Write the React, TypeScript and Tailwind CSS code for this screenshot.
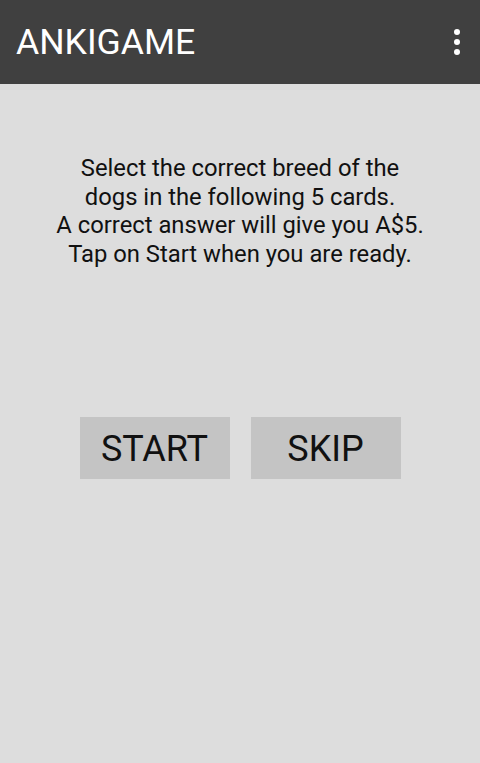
export default function App() {
  return (
    <div className="w-[480px] h-[763px] bg-[#dddddd] flex flex-col" style={{ fontFamily: "Roboto, sans-serif" }}>
      <header className="h-[84px] bg-[#404040] flex items-center justify-between pl-4 pr-5">
        <h1 className="text-white text-[35.6px] leading-none font-normal pt-[2px]">ANKIGAME</h1>
        <div className="flex flex-col gap-[4px]">
          <span className="w-[6px] h-[6px] rounded-full bg-white" />
          <span className="w-[6px] h-[6px] rounded-full bg-white" />
          <span className="w-[6px] h-[6px] rounded-full bg-white" />
        </div>
      </header>
      <main className="flex flex-col items-center">
        <p className="mt-[70px] text-center text-[23.8px] leading-[28.7px] text-[#111] whitespace-nowrap">
          Select the correct breed of the
          <br />
          dogs in the following 5 cards.
          <br />
          A correct answer will give you A$5.
          <br />
          Tap on Start when you are ready.
        </p>
        <div className="mt-[148px] flex gap-[21px]">
          <button className="w-[150px] h-[62px] pt-[2px] bg-[#c4c4c4] text-[36px] text-[#111]">START</button>
          <button className="w-[150px] h-[62px] pt-[2px] bg-[#c4c4c4] text-[36px] text-[#111]">SKIP</button>
        </div>
      </main>
    </div>
  );
}
